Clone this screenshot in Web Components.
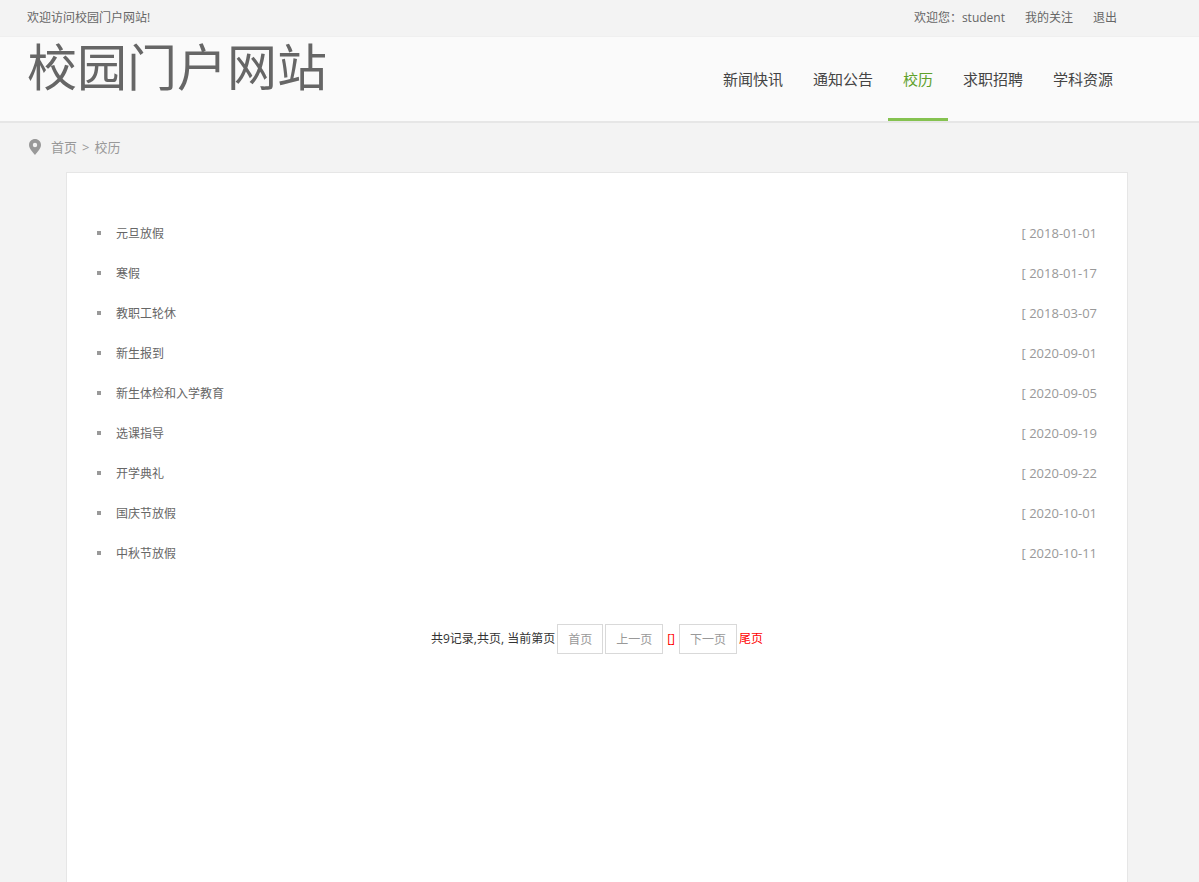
<!DOCTYPE html>
<html lang="zh-CN">
<head>
<meta charset="utf-8">
<title>校园门户网站</title>
<style>
  html, body {
    height: 100%;
  }
  body {
    margin: 0;
    background: #f3f3f3;
    color: #666;
    font: 12px/20px "Open Sans", "Noto Sans CJK SC", sans-serif;
    --gutter-left: 27px;
    --gutter-right: 71px;
  }
</style>
</head>
<body>
<portal-page>
  <top-bar slot="top" user="student"></top-bar>
  <site-header slot="header" current="校历"></site-header>
  <bread-crumb slot="crumb" current="校历"></bread-crumb>
  <notice-list>
    <notice-item date="2018-01-01">元旦放假</notice-item>
    <notice-item date="2018-01-17">寒假</notice-item>
    <notice-item date="2018-03-07">教职工轮休</notice-item>
    <notice-item date="2020-09-01">新生报到</notice-item>
    <notice-item date="2020-09-05">新生体检和入学教育</notice-item>
    <notice-item date="2020-09-19">选课指导</notice-item>
    <notice-item date="2020-09-22">开学典礼</notice-item>
    <notice-item date="2020-10-01">国庆节放假</notice-item>
    <notice-item date="2020-10-11">中秋节放假</notice-item>
  </notice-list>
  <page-nav total="9"></page-nav>
</portal-page>

<script>
class PortalPage extends HTMLElement {
  constructor() {
    super();
    this.attachShadow({ mode: 'open' });
    this.shadowRoot.innerHTML = `
      <style>
        :host {
          display: flex;
          flex-direction: column;
          min-height: 100%;
        }
        main {
          flex: 1;
          margin: 0 var(--gutter-right) 0 66px;
          padding: 40px 30px;
          background: #fff;
          border: 1px solid #e6e6e6;
          border-bottom: none;
        }
      </style>
      <slot name="top"></slot>
      <slot name="header"></slot>
      <slot name="crumb"></slot>
      <main><slot></slot></main>
    `;
  }
}

class TopBar extends HTMLElement {
  constructor() {
    super();
    this.attachShadow({ mode: 'open' });
  }

  connectedCallback() {
    this.shadowRoot.innerHTML = `
      <style>
        :host {
          display: flex;
          justify-content: space-between;
          align-items: center;
          height: 36px;
          padding: 0 var(--gutter-right) 0 var(--gutter-left);
          border-bottom: 1px solid #efefef;
        }
        .links {
          display: flex;
          gap: 20px;
          padding-right: 11px;
        }
        a {
          color: inherit;
          text-decoration: none;
        }
      </style>
      <span>欢迎访问校园门户网站!</span>
      <div class="links">
        <span>欢迎您：<a href="#">${this.getAttribute('user')}</a></span>
        <a href="#">我的关注</a>
        <a href="#">退出</a>
      </div>
    `;
  }
}

class SiteHeader extends HTMLElement {
  constructor() {
    super();
    this.attachShadow({ mode: 'open' });
    this.items = ['新闻快讯', '通知公告', '校历', '求职招聘', '学科资源'];
  }

  connectedCallback() {
    const current = this.getAttribute('current');
    this.shadowRoot.innerHTML = `
      <style>
        :host {
          display: flex;
          justify-content: space-between;
          align-items: flex-start;
          padding: 0 var(--gutter-right) 0 var(--gutter-left);
          background: #fafafa;
          border-bottom: 2px solid #e6e6e6;
        }
        h1 {
          margin: 0;
          font-size: 50px;
          line-height: 60px;
          font-weight: 400;
        }
        nav {
          display: flex;
        }
        a {
          padding: 3px 15px 0;
          border-bottom: 3px solid transparent;
          color: #444;
          font-size: 15px;
          line-height: 78px;
          text-decoration: none;
        }
        a.active {
          color: #5fa12b;
          border-color: #85c250;
        }
      </style>
      <h1>校园门户网站</h1>
      <nav>
        ${this.items.map(item => `<a href="#" class="${item === current ? 'active' : ''}">${item}</a>`).join('')}
      </nav>
    `;
  }
}

class BreadCrumb extends HTMLElement {
  constructor() {
    super();
    this.attachShadow({ mode: 'open' });
  }

  connectedCallback() {
    this.shadowRoot.innerHTML = `
      <style>
        :host {
          display: flex;
          align-items: center;
          padding: 14px 0 15px var(--gutter-left);
          color: #999;
          font-size: 13px;
        }
        svg {
          margin-right: 9px;
        }
        nav {
          display: flex;
          gap: 5px;
        }
        a {
          color: inherit;
          text-decoration: none;
        }
      </style>
      <svg width="15" height="16" viewBox="0 0 15 16">
        <path fill="#999" fill-rule="evenodd" d="M8 0C4.700 0 2 2.600 2 5.900C2 9.300 5.300 12.500 8 16C10.700 12.500 14 9.300 14 5.900C14 2.600 11.300 0 8 0ZM8 3.800A2.200 2.200 0 1 1 8 8.200A2.200 2.200 0 1 1 8 3.800Z"/>
      </svg>
      <nav><a href="#">首页</a><span>&gt;</span><a href="#">${this.getAttribute('current')}</a></nav>
    `;
  }
}

class NoticeList extends HTMLElement {
  constructor() {
    super();
    this.attachShadow({ mode: 'open' });
    this.shadowRoot.innerHTML = `
      <style>
        :host {
          display: flex;
          flex-direction: column;
        }
      </style>
      <slot></slot>
    `;
  }

  connectedCallback() {
    this.setAttribute('role', 'list');
  }
}

class NoticeItem extends HTMLElement {
  constructor() {
    super();
    this.attachShadow({ mode: 'open' });
  }

  connectedCallback() {
    this.setAttribute('role', 'listitem');
    this.shadowRoot.innerHTML = `
      <style>
        :host {
          display: flex;
          align-items: center;
          height: 40px;
        }
        :host::before {
          content: "";
          width: 4px;
          height: 4px;
          margin-right: 15px;
          background: #999;
        }
        a {
          flex: 1;
          padding-top: 2px;
          color: inherit;
          text-decoration: none;
        }
        time {
          color: #999;
          font-size: 13px;
        }
      </style>
      <a href="#"><slot></slot></a>
      <time datetime="${this.getAttribute('date')}">[ ${this.getAttribute('date')}</time>
    `;
  }
}

class PageNav extends HTMLElement {
  constructor() {
    super();
    this.attachShadow({ mode: 'open' });
  }

  connectedCallback() {
    this.shadowRoot.innerHTML = `
      <style>
        :host {
          display: flex;
          justify-content: center;
          align-items: center;
          gap: 2px;
          margin-top: 51px;
          color: #333;
        }
        a {
          color: #f00;
          text-decoration: none;
        }
        .box {
          padding: 5px 10px 3px;
          border: 1px solid #d9d9d9;
          color: #999;
        }
        .now {
          padding: 0 2px;
          color: #f00;
        }
      </style>
      <span>共${this.getAttribute('total')}记录,共页, 当前第页</span>
      <a class="box" href="#">首页</a>
      <a class="box" href="#">上一页</a>
      <span class="now">[]</span>
      <a class="box" href="#">下一页</a>
      <a href="#">尾页</a>
    `;
  }
}

customElements.define('portal-page', PortalPage);
customElements.define('top-bar', TopBar);
customElements.define('site-header', SiteHeader);
customElements.define('bread-crumb', BreadCrumb);
customElements.define('notice-list', NoticeList);
customElements.define('notice-item', NoticeItem);
customElements.define('page-nav', PageNav);
</script>
</body>
</html>
